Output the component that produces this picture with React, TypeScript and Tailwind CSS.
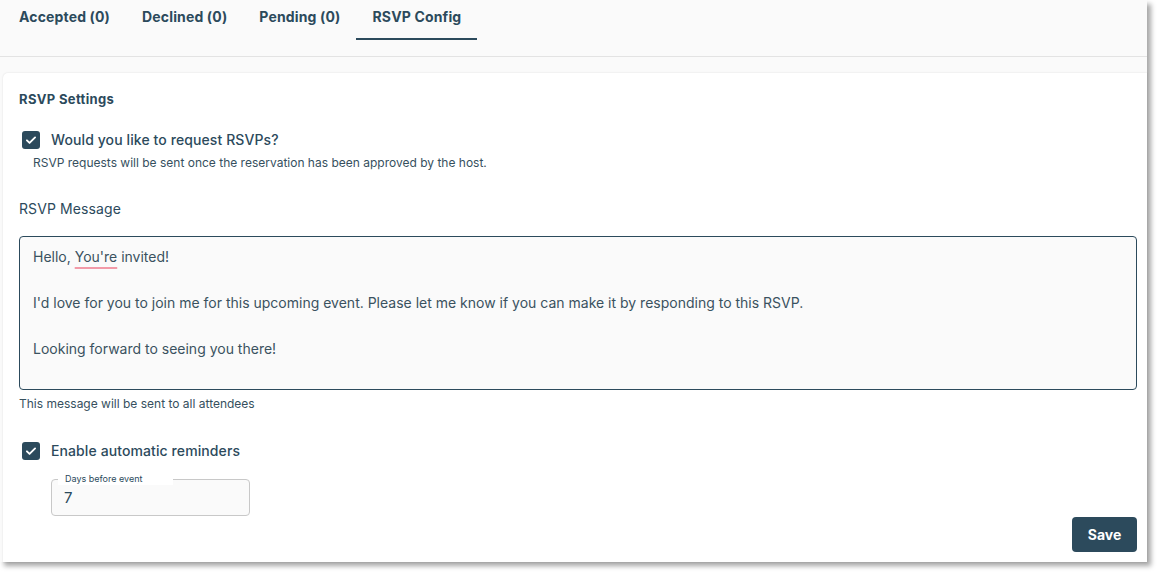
import React from "react";

function Check() {
  return (
    <span className="flex h-[18px] w-[18px] items-center justify-center rounded-[3px] bg-[#2c4a5c]">
      <svg width="14" height="14" viewBox="0 0 24 24" fill="none" stroke="white" strokeWidth="3.2" strokeLinecap="round" strokeLinejoin="round">
        <path d="M5 12.5l4.5 4.5L19 7.5" />
      </svg>
    </span>
  );
}

export default function App() {
  const tabs = ["Accepted (0)", "Declined (0)", "Pending (0)", "RSVP Config"];
  return (
    <div className="h-[572px] w-[1157px] bg-white" style={{ fontFamily: "Inter, 'Noto Sans', sans-serif" }}>
      <div className="flex h-[562px] w-[1147px] flex-col bg-[#fafafa] shadow-[4px_4px_5px_rgba(0,0,0,0.35)]">
        <div className="flex h-[57px] border-b border-[#e3e3e3] pl-[3px]">
          {tabs.map((t, i) => (
            <div key={t} className="relative flex h-[40px] items-start px-4 pt-[7px]">
              <span className="text-[14px] font-bold leading-[20px] tracking-[0.15px] text-[#2c4a5c]">{t}</span>
              {i === 3 && <span className="absolute bottom-0 left-0 right-0 h-[2px] bg-[#2c4a5c]" />}
            </div>
          ))}
        </div>
        <div className="flex flex-1 pl-[3px] pt-[16px]">
          <div className="flex flex-1 flex-col rounded-tl-[5px] bg-white pl-4 pr-[10px] pt-[17px] shadow-[0_0_2px_rgba(0,0,0,0.12)]">
            <div className="text-[13px] font-bold leading-[18px] tracking-[0.35px] text-[#2c4a5c]">RSVP Settings</div>
            <div className="mt-[20px] flex h-[24px] items-center pl-[3px]">
              <Check />
              <span className="ml-[11px] text-[14px] font-medium leading-[20px] tracking-[0.1px] text-[#2c4a5c]">Would you like to request RSVPs?</span>
            </div>
            <div className="mt-[3px] pl-[14px] text-[12px] leading-[16px] text-[#36505e]">
              RSVP requests will be sent once the reservation has been approved by the host.
            </div>
            <div className="mt-[28px] text-[14px] leading-[20px] tracking-[0.1px] text-[#2c4a5c]">RSVP Message</div>
            <div className="mt-[17px] h-[154px] rounded-[4px] border border-[#2c4a5c] bg-[#fafafa] px-[13px] pt-[8px] text-[14px] leading-[23px] text-[#3a5260]">
              <div>
                Hello,{" "}
                <span className="underline decoration-[#f29aa8] decoration-2 underline-offset-[5px]">You're</span> invited!
              </div>
              <div>&nbsp;</div>
              <div>I'd love for you to join me for this upcoming event. Please let me know if you can make it by responding to this RSVP.</div>
              <div>&nbsp;</div>
              <div>Looking forward to seeing you there!</div>
            </div>
            <div className="mt-[6px] text-[12px] leading-[16px] text-[#36505e]">This message will be sent to all attendees</div>
            <div className="mt-[27px] flex h-[24px] items-center pl-[3px]">
              <Check />
              <span className="ml-[11px] text-[14px] font-medium leading-[20px] tracking-[0.1px] text-[#2c4a5c]">Enable automatic reminders</span>
            </div>
            <div className="ml-[32px] mt-[16px]">
              <div className="relative h-[37px] w-[199px] rounded-[4px] border border-[#c8c8c8] bg-[#fafafa]">
                <span className="absolute left-[6px] top-[-7px] h-[12px] w-[115px] bg-white pl-[7px] text-[9px] leading-[12px] text-[#2c4a5c]">
                  Days before event
                </span>
                <div className="pl-[12px] pt-[8px] text-[15px] leading-[20px] text-[#2c4a5c]">7</div>
              </div>
            </div>
            <div className="flex justify-end">
              <button className="mt-[1px] h-[35px] w-[65px] rounded-[4px] bg-[#2c4a5c] text-[14px] font-bold text-white">Save</button>
            </div>
          </div>
        </div>
      </div>
    </div>
  );
}
